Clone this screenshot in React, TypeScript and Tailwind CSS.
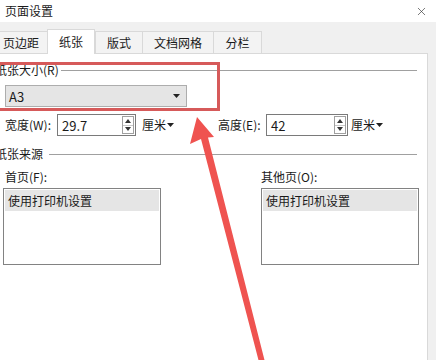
import { X } from "lucide-react";

const tabs = [
  { label: "页边距", w: "w-[59px]" },
  { label: "纸张", w: "w-[48px]", active: true },
  { label: "版式", w: "w-[47px]" },
  { label: "文档网格", w: "w-[71px]" },
  { label: "分栏", w: "w-[49px]" },
];

function Caret({ className = "" }: { className?: string }) {
  return (
    <svg width="7" height="4" viewBox="0 0 7 4" className={className}>
      <path d="M0 0 L7 0 L3.5 4 Z" fill="#222" />
    </svg>
  );
}

function SpinInput({ value, width }: { value: string; width: string }) {
  return (
    <div className={`${width} flex h-[22px] items-center border border-[#7a7a7a] bg-white`}>
      <span className="flex-1 pl-[4px] text-[13px] leading-none">{value}</span>
      <div className="mr-[1px] flex h-[18px] w-[12px] flex-col border border-[#a0a0a0]">
        <div className="flex flex-1 items-center justify-center border-b border-[#c8c8c8]">
          <svg width="6" height="4" viewBox="0 0 6 4">
            <path d="M0 4 L6 4 L3 0 Z" fill="#333" />
          </svg>
        </div>
        <div className="flex flex-1 items-center justify-center">
          <svg width="6" height="4" viewBox="0 0 6 4">
            <path d="M0 0 L6 0 L3 4 Z" fill="#333" />
          </svg>
        </div>
      </div>
    </div>
  );
}

function Unit() {
  return (
    <div className="flex items-center gap-[1px] text-[12px] leading-none">
      <span>厘米</span>
      <Caret />
    </div>
  );
}

function GroupTitle({ text, lineStart }: { text: string; lineStart: string }) {
  return (
    <div className="flex h-[14px] items-center">
      <span className="-ml-[5px] shrink-0 text-[12px] leading-none">{text}</span>
      <div className={`${lineStart} h-px w-[356px] bg-[#a0a0a0]`} />
    </div>
  );
}

function ListBox() {
  return (
    <div className="h-[77px] w-[158px] border border-[#828282] bg-white p-[1px]">
      <div className="flex h-[21px] items-center bg-[#e5e5e5] pl-[3px] text-[12px] leading-none">
        使用打印机设置
      </div>
    </div>
  );
}

export default function App() {
  return (
    <div className="relative h-[360px] w-[436px] overflow-hidden bg-[#f0f0f0] font-['Noto_Sans_CJK_SC',sans-serif] text-[#1a1a1a]">
      {/* title bar */}
      <div className="flex h-[22px] items-center justify-between bg-white pl-[5px] pr-[8px]">
        <span className="text-[12px] leading-none">页面设置</span>
        <X size={13} strokeWidth={1.2} color="#333" />
      </div>
      <div className="h-[8px]" />

      {/* tabs */}
      <div className="-ml-[12px] flex h-[23px] items-end">
        {tabs.map((t, i) => (
          <div
            key={t.label}
            className={`${t.w} flex items-center justify-center border-l border-t border-[#d9d9d9] text-[12px] leading-none ${
              i === tabs.length - 1 ? "border-r" : ""
            } ${t.active ? "relative z-10 -mb-px h-[25px] border-r bg-white" : "h-[22px] bg-[#f3f3f3]"}`}
          >
            <span className={t.label === "页边距" ? "pl-[6px]" : ""}>{t.label}</span>
          </div>
        ))}
      </div>

      {/* panel */}
      <div className="h-[307px] w-[428px] border-r border-t border-[#d9d9d9] bg-white">
        <div className="pt-[9px]">
          <GroupTitle text="纸张大小(R)" lineStart="ml-[2px]" />
        </div>

        <div className="ml-[5px] mt-[8px] flex h-[22px] w-[182px] items-center justify-between border border-[#adadad] bg-[#e5e5e5] pl-[3px] pr-[6px]">
          <span className="text-[13px] leading-none">A3</span>
          <Caret />
        </div>

        <div className="mt-[7px] flex items-center">
          <span className="ml-[5px] w-[52px] text-[12px] leading-none">宽度(W):</span>
          <SpinInput value="29.7" width="w-[79px]" />
          <div className="ml-[6px]">
            <Unit />
          </div>
          <span className="ml-[44px] w-[48px] text-[12px] leading-none">高度(E):</span>
          <SpinInput value="42" width="w-[82px]" />
          <div className="ml-[3px]">
            <Unit />
          </div>
        </div>

        <div className="mt-[11px] flex h-[14px] items-center">
          <span className="-ml-[5px] shrink-0 text-[12px] leading-none">纸张来源</span>
          <div className="ml-[6px] h-px w-[368px] bg-[#a0a0a0]" />
        </div>

        <div className="mt-[10px] flex">
          <div className="ml-[3px] flex flex-col">
            <span className="ml-[2px] h-[14px] text-[12px] leading-none">首页(F):</span>
            <div className="mt-[3px]">
              <ListBox />
            </div>
          </div>
          <div className="ml-[100px] flex flex-col">
            <span className="h-[14px] text-[12px] leading-none">其他页(O):</span>
            <div className="mt-[3px]">
              <ListBox />
            </div>
          </div>
        </div>
      </div>

      {/* annotation: red box */}
      <div className="absolute left-[-10px] top-[62px] h-[49px] w-[230px] border-[3px] border-[#d65a5a]" />

      {/* annotation: arrow */}
      <svg className="absolute left-0 top-0" width="436" height="360" viewBox="0 0 436 360">
        <path
          d="M197 117 L214 137 L208 137.5 L265 362 L259 362 L201 139 L190 144 Z"
          fill="#ef5350"
        />
      </svg>
    </div>
  );
}
